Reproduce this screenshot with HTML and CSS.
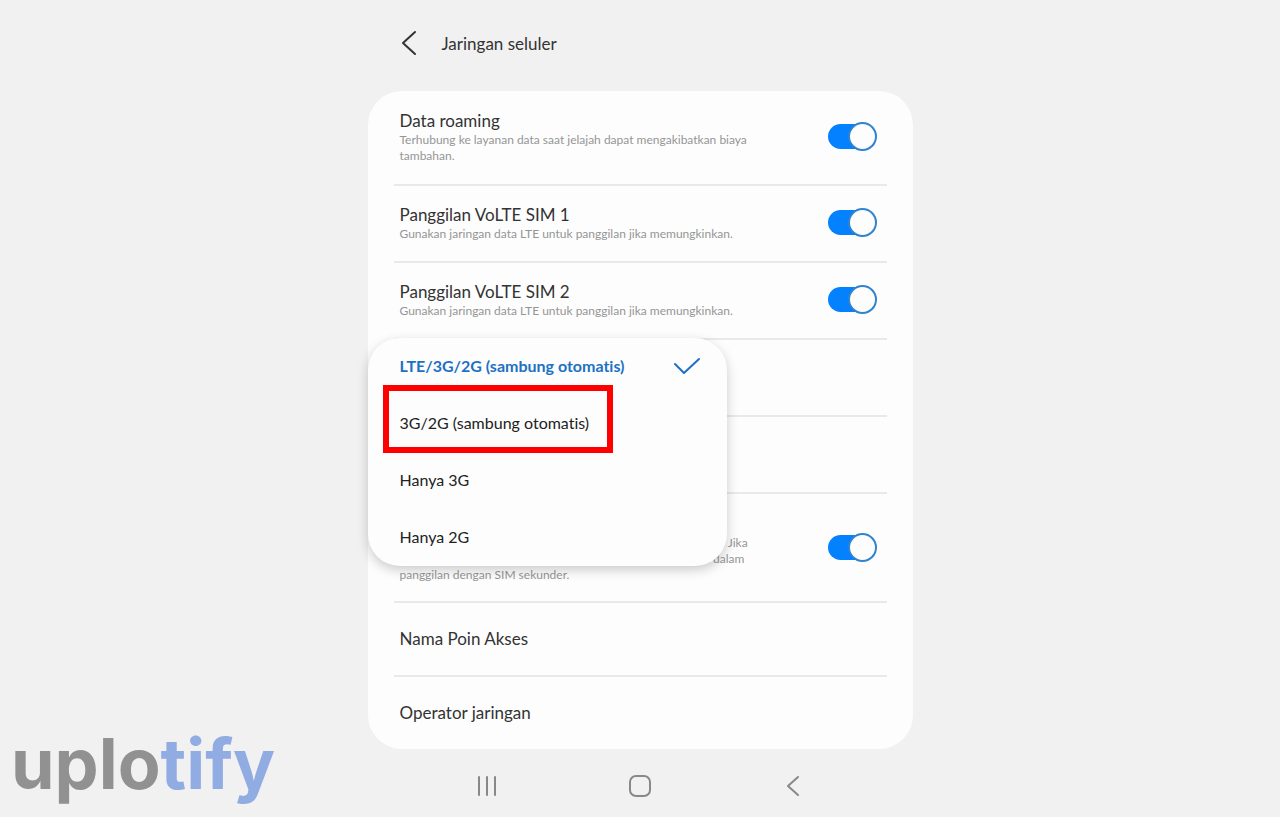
FILE: index.html
```
<!DOCTYPE html>
<html lang="id">
<head>
    <meta charset="UTF-8">
    <meta name="viewport" content="width=device-width, initial-scale=1.0">
    <title>Jaringan seluler</title>
    <link rel="stylesheet" href="styles.css">
</head>
<body>
    <div class="container">
        <header class="header">
            <a href="#" class="back" aria-label="Kembali">
                <svg width="16" height="26" viewBox="0 0 16 26"><path d="M14 2L2 13L14 24"/></svg>
            </a>
            <h1>Jaringan seluler</h1>
        </header>

        <main class="card">
            <div class="row row-first">
                <label class="text" for="roaming">
                    <span class="title">Data roaming</span>
                    <span class="desc">Terhubung ke layanan data saat jelajah dapat mengakibatkan biaya<br>tambahan.</span>
                </label>
                <input type="checkbox" id="roaming" class="switch" checked>
            </div>
            <div class="row">
                <label class="text" for="volte1">
                    <span class="title">Panggilan VoLTE SIM 1</span>
                    <span class="desc">Gunakan jaringan data LTE untuk panggilan jika memungkinkan.</span>
                </label>
                <input type="checkbox" id="volte1" class="switch" checked>
            </div>
            <div class="row">
                <label class="text" for="volte2">
                    <span class="title">Panggilan VoLTE SIM 2</span>
                    <span class="desc">Gunakan jaringan data LTE untuk panggilan jika memungkinkan.</span>
                </label>
                <input type="checkbox" id="volte2" class="switch" checked>
            </div>
            <div class="row">
                <!-- Network mode menu, opens over the rows below -->
                <div class="menu" role="listbox" aria-label="Mode jaringan">
                    <button type="button" class="option selected" role="option" aria-selected="true">
                        LTE/3G/2G (sambung otomatis)
                        <svg width="28" height="18" viewBox="0 0 28 18"><path d="M2 7L11 16L26 2"/></svg>
                    </button>
                    <button type="button" class="option highlight" role="option">3G/2G (sambung otomatis)</button>
                    <button type="button" class="option" role="option">Hanya 3G</button>
                    <button type="button" class="option" role="option">Hanya 2G</button>
                </div>
            </div>
            <div class="row"></div>
            <div class="row row-tall">
                <label class="text" for="switching">
                    <span class="title">Izinkan beralih data seluler saat panggilan</span>
                    <span class="desc">Gunakan data seluler dari SIM sekunder selama ada panggilan. Jika<br>diaktifkan, data seluler dari SIM panggilan dipakai selama di dalam<br>panggilan dengan SIM sekunder.</span>
                </label>
                <input type="checkbox" id="switching" class="switch" checked>
            </div>
            <a href="#" class="row row-link"><span class="title">Nama Poin Akses</span></a>
            <a href="#" class="row row-link"><span class="title">Operator jaringan</span></a>
        </main>
    </div>

    <footer class="footer">
        <div class="logo">uplo<span>tify</span></div>
        <nav class="navbar">
            <button type="button" aria-label="Terbaru">
                <svg width="24" height="24" viewBox="0 0 24 24"><path d="M4 3V21M12 3V21M20 3V21"/></svg>
            </button>
            <button type="button" aria-label="Beranda">
                <svg width="24" height="24" viewBox="0 0 24 24"><rect x="2" y="2" width="20" height="20" rx="6"/></svg>
            </button>
            <button type="button" aria-label="Kembali">
                <svg width="24" height="24" viewBox="0 0 24 24"><path d="M17 3L7 12L17 21"/></svg>
            </button>
        </nav>
    </footer>
</body>
</html>
```
FILE: styles.css
```
*,
*::before,
*::after {
    box-sizing: border-box;
}

body {
    margin: 0;
    min-height: 100vh;
    background-color: #f1f1f1;
    color: #333;
    font-family: Lato, sans-serif;
    font-variant-ligatures: none;
}

.container {
    width: 100%;
    max-width: 545px;
    margin: 0 auto;
}

.header {
    display: flex;
    align-items: center;
    gap: 25px;
    height: 91px;
    padding: 0 33px 5px;
}

.back {
    display: flex;
}

svg {
    display: block;
    fill: none;
    stroke: #333;
    stroke-width: 2;
    stroke-linecap: round;
    stroke-linejoin: round;
}

h1 {
    margin: 0;
    font-size: 17px;
    font-weight: normal;
}

.card {
    padding: 0 26px;
    border-radius: 34px;
    background-color: #fdfdfd;
}

.row {
    position: relative;
    display: flex;
    align-items: center;
    justify-content: space-between;
    min-height: 77px;
    padding: 0 10px 2px 6px;
    border-bottom: 2px solid #e9e9e9;
    color: inherit;
    text-decoration: none;
}

.row-first {
    min-height: 95px;
}

.row-tall {
    min-height: 109px;
    padding-bottom: 0;
}

.row-link {
    min-height: 74px;
    padding-bottom: 0;
}

.row:last-child {
    min-height: 72px;
    border-bottom: none;
}

.title {
    display: block;
    font-size: 17px;
    line-height: 22px;
}

.desc {
    display: block;
    color: #959595;
    font-size: 12px;
    line-height: 16px;
    white-space: nowrap;
}

.switch {
    appearance: none;
    position: relative;
    flex: none;
    width: 49px;
    height: 29px;
    margin: 0;
    cursor: pointer;
}

.switch::before {
    content: "";
    position: absolute;
    inset: 2px 8px 2px 0;
    border-radius: 13px;
    background-color: #0381fe;
}

.switch::after {
    content: "";
    position: absolute;
    top: 0;
    right: 0;
    width: 29px;
    height: 29px;
    border: 2px solid #2f83cf;
    border-radius: 50%;
    background-color: #fdfdfd;
}

.menu {
    position: absolute;
    top: -2px;
    left: -26px;
    z-index: 1;
    width: 359px;
    border-radius: 32px;
    background-color: #fdfdfd;
    box-shadow: 0 4px 12px rgba(0, 0, 0, 0.2);
}

.option {
    position: relative;
    display: flex;
    align-items: center;
    justify-content: space-between;
    width: 100%;
    height: 57px;
    padding: 0 26px 2px 32px;
    border: none;
    background: none;
    color: #222;
    font-family: inherit;
    font-size: 16px;
    font-variant-ligatures: none;
    cursor: pointer;
}

.selected {
    color: #1c71c4;
    font-weight: bold;
}

.selected svg {
    stroke: #1c71c4;
}

.highlight::after {
    content: "";
    position: absolute;
    top: -10px;
    left: 15px;
    width: 230px;
    height: 68px;
    border: 6px solid #f00;
}

.footer {
    position: relative;
    display: flex;
    justify-content: center;
    padding-top: 25px;
}

.navbar {
    display: flex;
    justify-content: space-between;
    width: 330px;
}

.navbar button {
    padding: 0;
    border: none;
    background: none;
    cursor: pointer;
}

.navbar svg {
    stroke: #888;
}

.logo {
    position: absolute;
    bottom: -8px;
    left: 11px;
    color: #919191;
    font-family: Inter, sans-serif;
    font-size: 70px;
    font-weight: bold;
    line-height: 84px;
}

.logo span {
    color: #91abe3;
}
```
